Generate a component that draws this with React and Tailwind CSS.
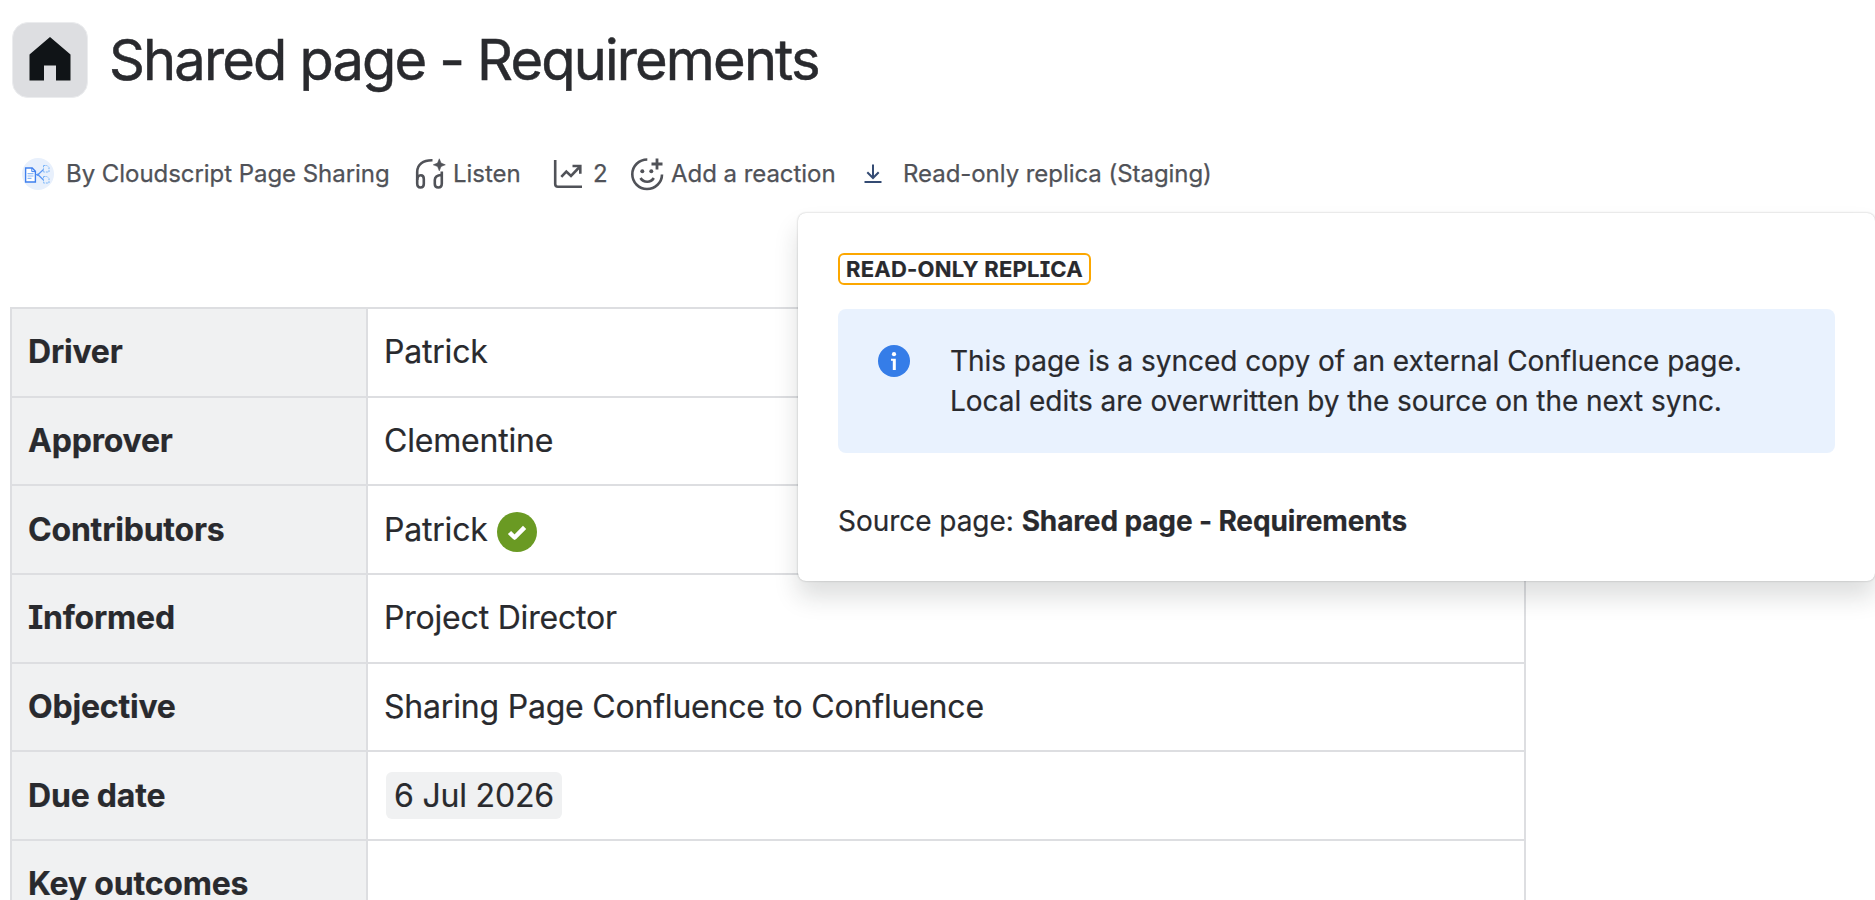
import clsx from 'clsx'

const rows = [
  { label: 'Driver', value: 'Patrick' },
  { label: 'Approver', value: 'Clementine' },
  { label: 'Contributors', value: 'Patrick', verified: true },
  { label: 'Informed', value: 'Project Director' },
  { label: 'Objective', value: 'Sharing Page Confluence to Confluence' },
  { label: 'Due date', date: '6 Jul 2026' },
  { label: 'Key outcomes' },
]

const HomeIcon = () => (
  <svg viewBox="0 0 42 44" className="h-11 w-[42px]" fill="#101417">
    <path d="M21 0 L41.5 17.5 V43.5 H27 V28.5 H15 V43.5 H0.5 V17.5 Z" />
  </svg>
)

const AvatarIcon = () => (
  <svg viewBox="0 0 32 32" className="size-8 shrink-0" fill="none">
    <circle cx="16" cy="16" r="16" fill="#e8f0fc" />
    <path d="M3.6 10 H10.2 L13.4 13.2 V24 H3.6 Z" fill="#fff" stroke="#3f80ee" strokeWidth="1.4" />
    <path d="M9.8 10 V13.6 H13.4" stroke="#3f80ee" />
    <path d="M5.5 15.6 H11.5 M5.5 18 H11.5 M5.5 20.4 H9.5" stroke="#8db9f7" strokeWidth="1.2" />
    <path d="M13.6 16.7 H16 L21.5 11.5 M16 16.7 L21.5 22" stroke="#5c97f3" strokeWidth="1.3" />
    <circle cx="16" cy="16.7" r="1.2" fill="#5c97f3" />
    <path d="M21.5 7.5 H25 L27 9.5 V14 H21.5 Z M21.5 18.5 H25 L27 20.5 V25 H21.5 Z" stroke="#7ab5f8" strokeDasharray="2 1" />
  </svg>
)

const ListenIcon = () => (
  <svg viewBox="0 0 32 32" className="size-8 shrink-0" fill="none" stroke="#505258" strokeWidth="2.6">
    <path d="M2.2 22 V14 C2.2 6.5 8 2 17.5 2.2" />
    <path d="M2.2 22 C2.2 18.5 4 17.2 5.8 17.2 C7.800 17.2 8.8 18.8 8.8 21 V26 C8.8 28.2 7.5 29.5 5.5 29.5 C3.3 29.5 2.2 27.8 2.2 25.5 Z" />
    <path d="M26.8 13.5 V25.5 C26.8 28 25.5 29.5 23.3 29.5 C21 29.5 19.8 28 19.8 26 V22 C19.8 19 22 17.3 26.8 16.8" />
    <path d="M24.3 0.8 L26 5.1 L30.3 6.8 L26 8.5 L24.3 12.8 L22.6 8.5 L18.3 6.8 L22.6 5.1 Z" fill="#505258" stroke="#505258" strokeWidth="0.6" />
  </svg>
)

const ChartIcon = () => (
  <svg viewBox="0 0 30 30" className="size-[30px] shrink-0" fill="none" stroke="#505258" strokeWidth="2.6">
    <path d="M2.2 1 V25 C2.2 27 3 27.8 5 27.8 H29" />
    <path d="M8.3 17.8 L13.3 12.5 L18 17 L27 7.5" />
    <path d="M19.5 7 H27.3 V14.8" />
  </svg>
)

const ReactionIcon = () => (
  <svg viewBox="0 0 34 34" className="size-[34px] shrink-0" fill="none" stroke="#505258" strokeWidth="2.6">
    <path d="M17.3 2.5 C9 2.5 2.3 9 2.3 17.2 C2.3 25.5 9 32 17 32 C25.2 32 32 25.5 32 17.5" />
    <path d="M10.5 21 C12 23.5 14.3 24.7 17.2 24.7 C20 24.7 22.3 23.5 23.8 21" />
    <path d="M27 1.5 V12.5 M21.5 7 H32.5" strokeWidth="2.8" />
    <circle cx="12.3" cy="14.3" r="2" fill="#505258" stroke="none" />
    <circle cx="21.3" cy="14.3" r="2" fill="#505258" stroke="none" />
  </svg>
)

const DownloadIcon = () => (
  <svg viewBox="0 0 18 20" className="h-5 w-[18px] shrink-0" fill="none" stroke="#344b73" strokeWidth="2">
    <path d="M9 0.5 V13.5 M3.3 8.3 L9 14 L14.7 8.3" />
    <path d="M0.5 18 H17.5" />
  </svg>
)

const InfoIcon = () => (
  <svg viewBox="0 0 32 32" className="size-8 shrink-0">
    <circle cx="16" cy="16" r="16" fill="#357de8" />
    <circle cx="16" cy="9.2" r="2.1" fill="#fff" />
    <path d="M13 13.7 H17.8 V25 H14.8 V15.7 H13 Z" fill="#fff" />
  </svg>
)

const CheckBadge = () => (
  <svg viewBox="0 0 40 40" className="mt-[4px] size-10 shrink-0">
    <circle cx="20" cy="20" r="20" fill="#6a9a23" />
    <path d="M12.5 20.5 L17.6 25.5 L27.6 15.3" fill="none" stroke="#fff" strokeWidth="4.5" strokeLinejoin="round" />
  </svg>
)

const PageHeader = () => (
  <header className="flex h-[76px] items-center pl-3">
    <div className="flex size-[76px] items-center justify-center rounded-2xl border border-[#ebecee] bg-[#dddee1] pb-[3px]">
      <HomeIcon />
    </div>
    <h1 className="ml-[21px] text-[56px] leading-[76px] tracking-[-1.84px] text-[#292a2e] [-webkit-text-stroke:0.5px_#292a2e]">
      Shared page - Requirements
    </h1>
  </header>
)

const Byline = () => (
  <div className="mt-[58px] flex h-9 items-center whitespace-nowrap pl-[22px] text-2xl tracking-[-0.05px] text-[#505258] [-webkit-text-stroke:0.25px_#505258]">
    <AvatarIcon />
    <span className="ml-3 w-[324px]">By Cloudscript Page Sharing</span>
    <div className="ml-[25px] flex w-[138px] items-center gap-[6px]">
      <ListenIcon />
      <span>Listen</span>
    </div>
    <div className="flex w-[77px] items-center gap-[10px]">
      <ChartIcon />
      <span>2</span>
    </div>
    <div className="flex w-[234px] items-center gap-[7px]">
      <ReactionIcon />
      <span>Add a reaction</span>
    </div>
    <div className="flex items-center gap-[21px]">
      <DownloadIcon />
      <span>Read-only replica (Staging)</span>
    </div>
  </div>
)

const DetailsTable = () => (
  <section className="ml-[10px] mt-[115px] w-[1516px] border-r-2 border-[#dddee1] text-[32px] tracking-[-0.2px] text-[#292a2e] [-webkit-text-stroke:0.2px_#292a2e]">
    {rows.map(row => (
      <div key={row.label} className="flex h-[88.7px] border-l-2 border-t-2 border-[#dddee1]">
        <div
          className={clsx(
            'flex w-[356px] items-center border-r-2 border-[#dddee1] bg-[#f0f1f2] pl-4 font-bold',
            "[font-feature-settings:'cv08']"
          )}
        >
          {row.label}
        </div>
        <div className="flex items-center gap-[9px] pl-4">
          {row.value}
          {row.verified && <CheckBadge />}
          {row.date && (
            <span className="ml-[2px] rounded-md bg-[#f0f1f2] px-2 leading-[47px]">{row.date}</span>
          )}
        </div>
      </div>
    ))}
  </section>
)

const ReplicaPopup = () => (
  <aside className="absolute left-[798px] top-[213px] h-[368px] w-[1077px] rounded-lg bg-white px-10 pt-10 text-[28px] leading-10 tracking-[-0.04px] text-[#292a2e] shadow-[0_16px_24px_rgba(30,31,33,0.15),0_0_2px_rgba(30,31,33,0.31)] [-webkit-text-stroke:0.2px_#292a2e]">
    <div className="flex h-8 w-[253px] items-center justify-center whitespace-nowrap rounded-md border-2 border-[#fca700] text-[22px] font-bold tracking-[0.22px] [font-feature-settings:'cv08']">
      READ-ONLY REPLICA
    </div>
    <div className="mt-6 flex h-[144px] w-[997px] rounded-lg bg-[#e9f2fe] pl-10 pt-8">
      <div className="pt-1">
        <InfoIcon />
      </div>
      <p className="ml-10 whitespace-nowrap">
        This page is a synced copy of an external Confluence page.
        <br />
        Local edits are overwritten by the source on the next sync.
      </p>
    </div>
    <p className="mt-12">
      Source page: <strong className="font-bold tracking-[-0.13px]">Shared page - Requirements</strong>
    </p>
  </aside>
)

const App = () => {
  return (
    <main className="relative h-[900px] w-[1875px] overflow-hidden bg-white pt-[22px] font-[Inter,sans-serif]">
      <PageHeader />
      <Byline />
      <DetailsTable />
      <ReplicaPopup />
    </main>
  )
}

export default App
